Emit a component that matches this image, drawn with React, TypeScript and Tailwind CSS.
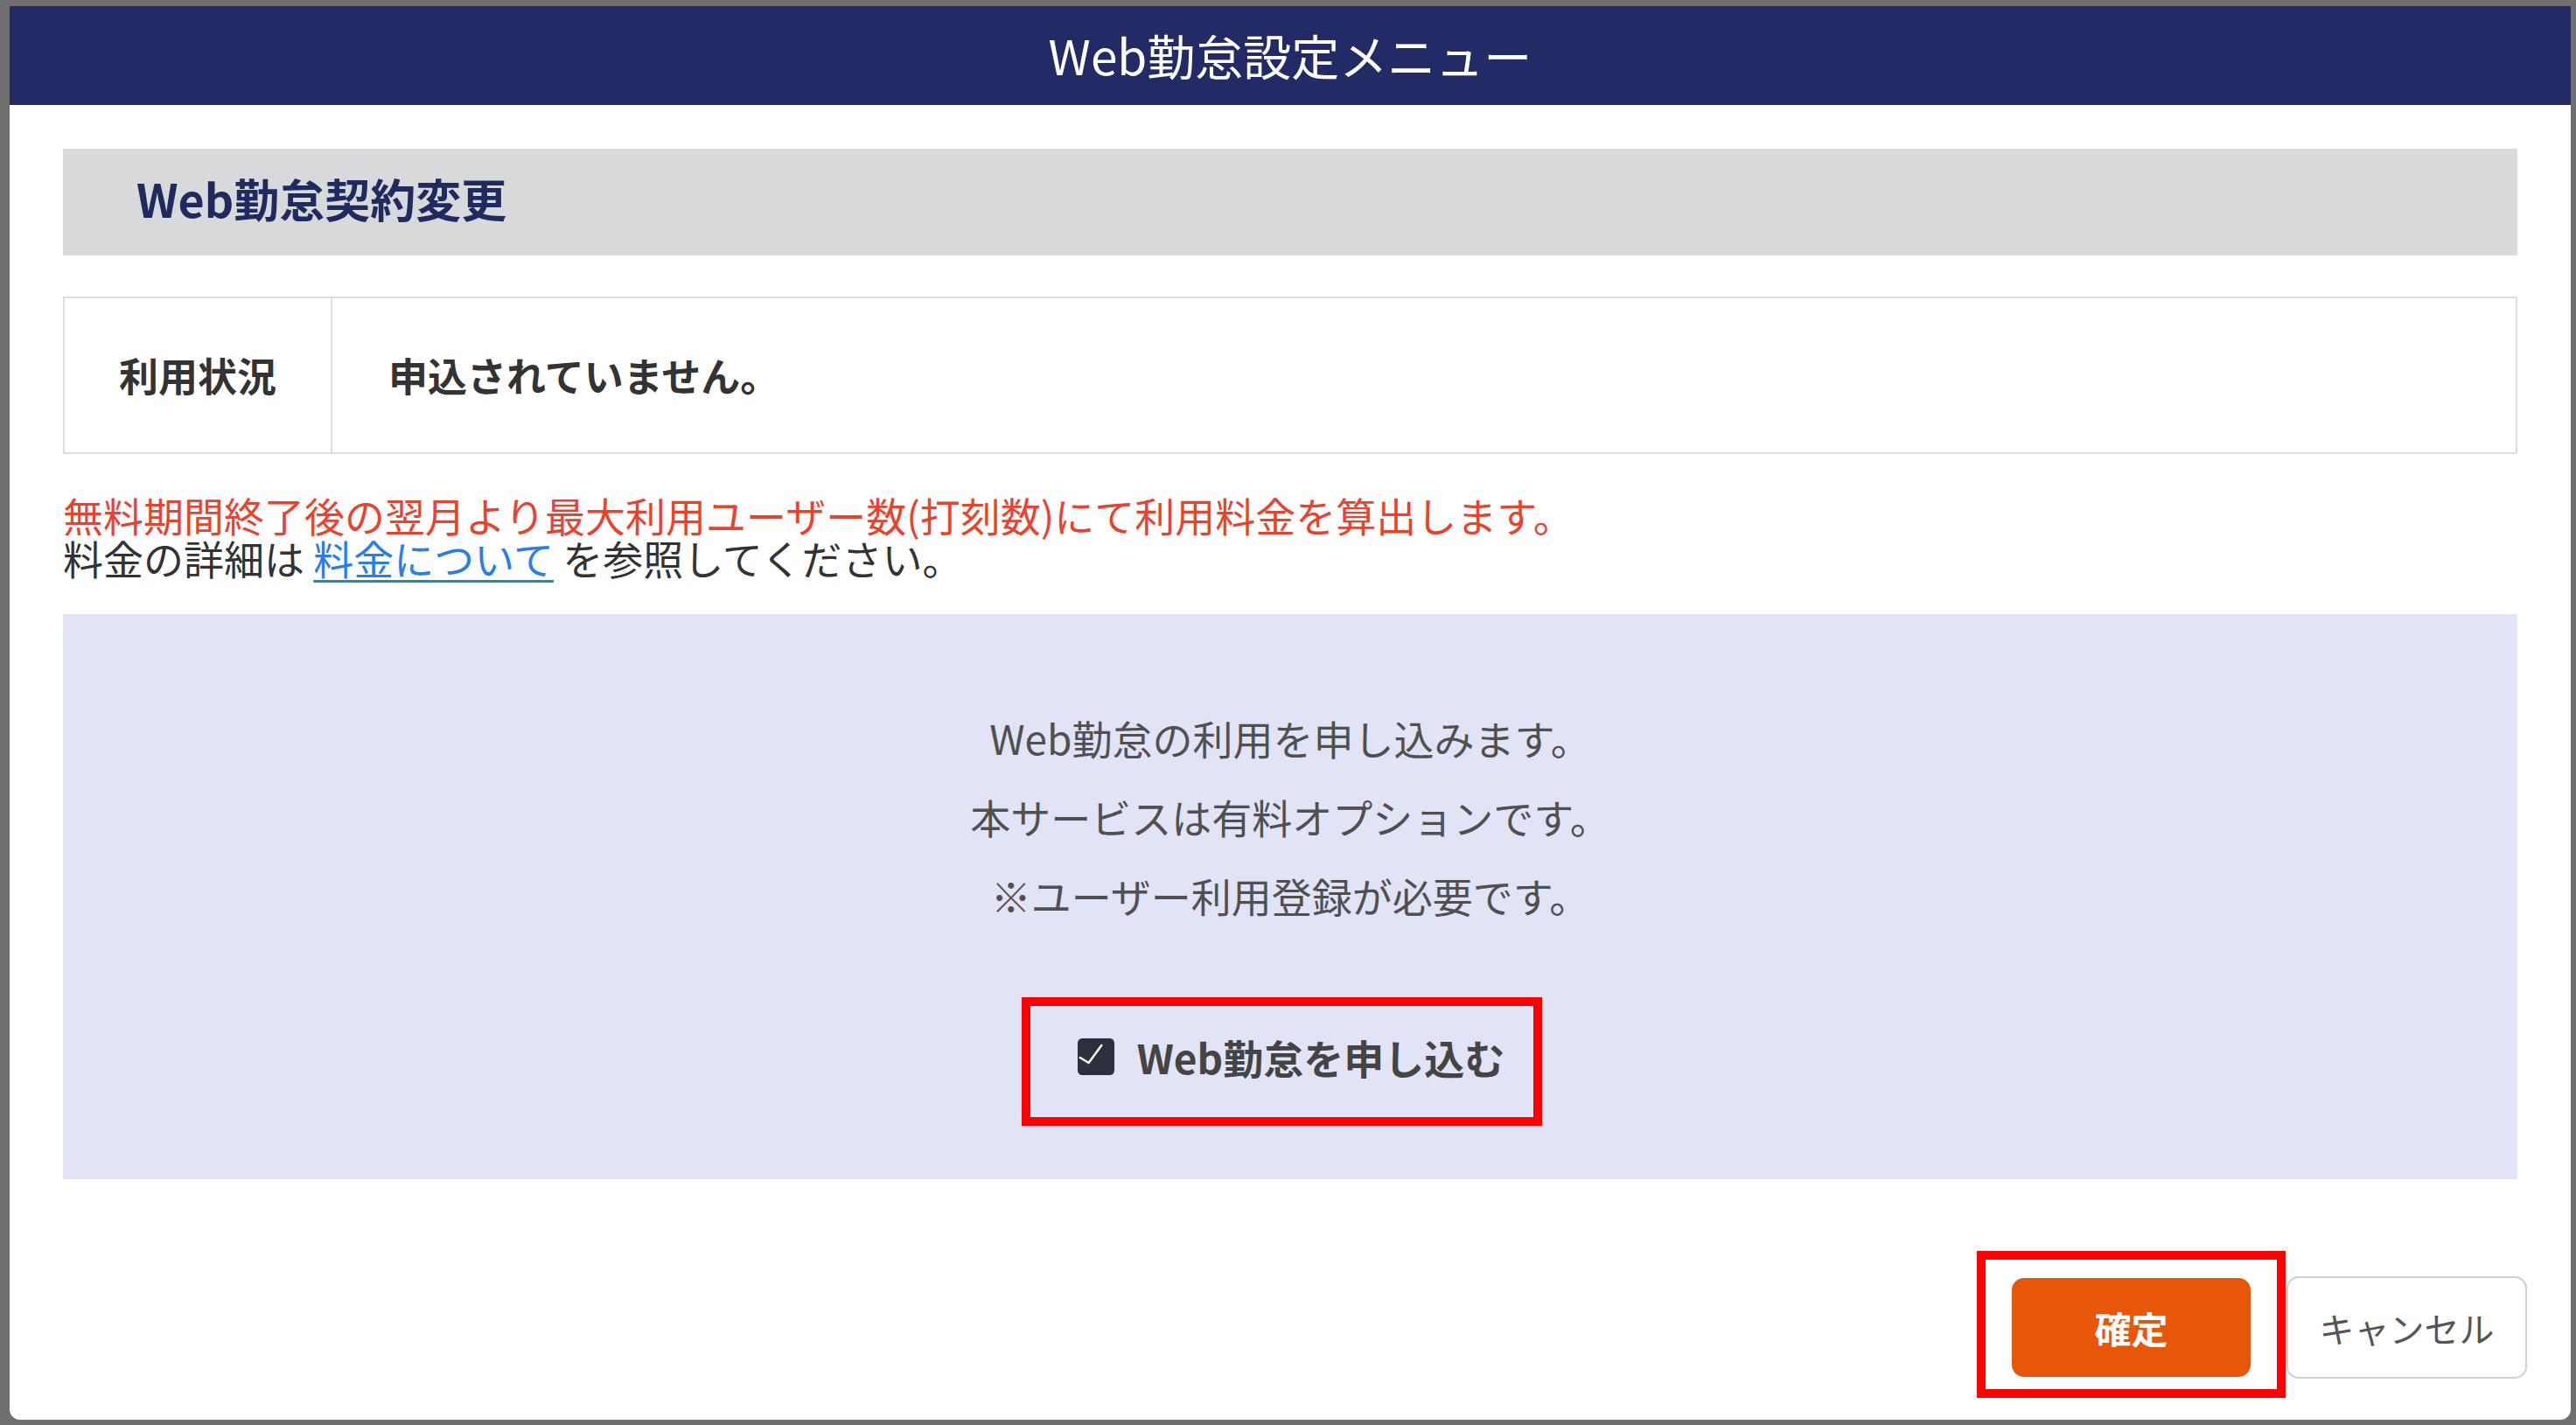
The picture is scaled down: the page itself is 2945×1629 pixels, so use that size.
function CheckedBox() {
  return (
    <svg width="42" height="42" viewBox="0 0 24 24" className="shrink-0">
      <rect x="0" y="0" width="24" height="24" rx="3" fill="#2b313d" />
      <polyline points="1.6,12.6 7.2,16 15.6,4.6" fill="none" stroke="#ffffff" strokeWidth="1.4" strokeLinecap="round" strokeLinejoin="round" />
    </svg>
  )
}

export default function App() {
  return (
    <div className="relative h-[1629px] w-full overflow-hidden bg-[#6f6f6f] font-['Noto_Sans_CJK_JP','Noto_Sans',sans-serif]">
      <div className="ml-[11px] mr-[6px] mt-[7px] flex h-[1616px] flex-col overflow-hidden rounded-b-[12px] bg-white">
        {/* ヘッダー */}
        <div className="flex h-[113px] shrink-0 items-center justify-center bg-[#222b65] pb-[2px] text-[55px] text-white">
          Web勤怠設定メニュー
        </div>

        <div className="flex flex-1 flex-col px-[61px]">
          {/* セクション見出し */}
          <div className="mt-[50px] flex h-[122px] items-center bg-[#d8d9db] pb-[8px] pl-[84px] text-[52px] font-bold text-[#1f2a5e]">
            Web勤怠契約変更
          </div>

          {/* 利用状況 */}
          <div className="mt-[47px] flex h-[180px] border-2 border-[#dedede] text-[#333333]">
            <div className="flex w-[306px] shrink-0 items-center justify-center border-r-2 border-[#dedede] text-[45px] font-bold">
              利用状況
            </div>
            <div className="flex items-center pl-[64px] text-[45px] font-bold">
              申込されていません。
            </div>
          </div>

          {/* 注意書き */}
          <div className="mt-[45px] text-[46px] leading-[49px]">
            <div className="text-[#e8432f]">無料期間終了後の翌月より最大利用ユーザー数(打刻数)にて利用料金を算出します。</div>
            <div className="text-[#333333]">
              料金の詳細は{' '}
              <a className="text-[#2b7de9] underline decoration-[#1f8bb5] decoration-[3px] underline-offset-[6px]">料金について</a>{' '}
              を参照してください。
            </div>
          </div>

          {/* 申込パネル */}
          <div className="mt-[40px] flex h-[646px] flex-col items-center bg-[#e1e4f6] pt-[96px]">
            <div className="text-center text-[46px] leading-[90px] text-[#505050]">
              <p>Web勤怠の利用を申し込みます。</p>
              <p>本サービスは有料オプションです。</p>
              <p>※ユーザー利用登録が必要です。</p>
            </div>

            <div className="mt-[110px] flex pl-[2px]">
              <label className="relative flex h-[60px] items-center gap-[26px] text-[46px] font-bold text-[#444444]">
                <CheckedBox />
                <span>Web勤怠を申し込む</span>
                <span className="pointer-events-none absolute -left-[64px] -top-[38px] h-[147px] w-[595px] border-[10px] border-[#ff0000]" />
              </label>
            </div>
          </div>

          {/* フッター */}
          <div className="mt-[111px] mr-[-11px] flex items-center justify-end gap-[41px]">
            <button className="relative flex h-[113px] w-[273px] items-center justify-center rounded-[14px] bg-[#e85709] text-[42px] font-bold text-white">
              確定
              <span className="pointer-events-none absolute -left-[40px] -top-[31px] h-[168px] w-[353px] border-[10px] border-[#ff0000]" />
            </button>
            <button className="flex h-[117px] w-[275px] items-center justify-center rounded-[14px] border-2 border-[#d0d0d0] bg-white text-[40px] text-[#555555]">
              キャンセル
            </button>
          </div>
        </div>
      </div>
    </div>
  )
}
